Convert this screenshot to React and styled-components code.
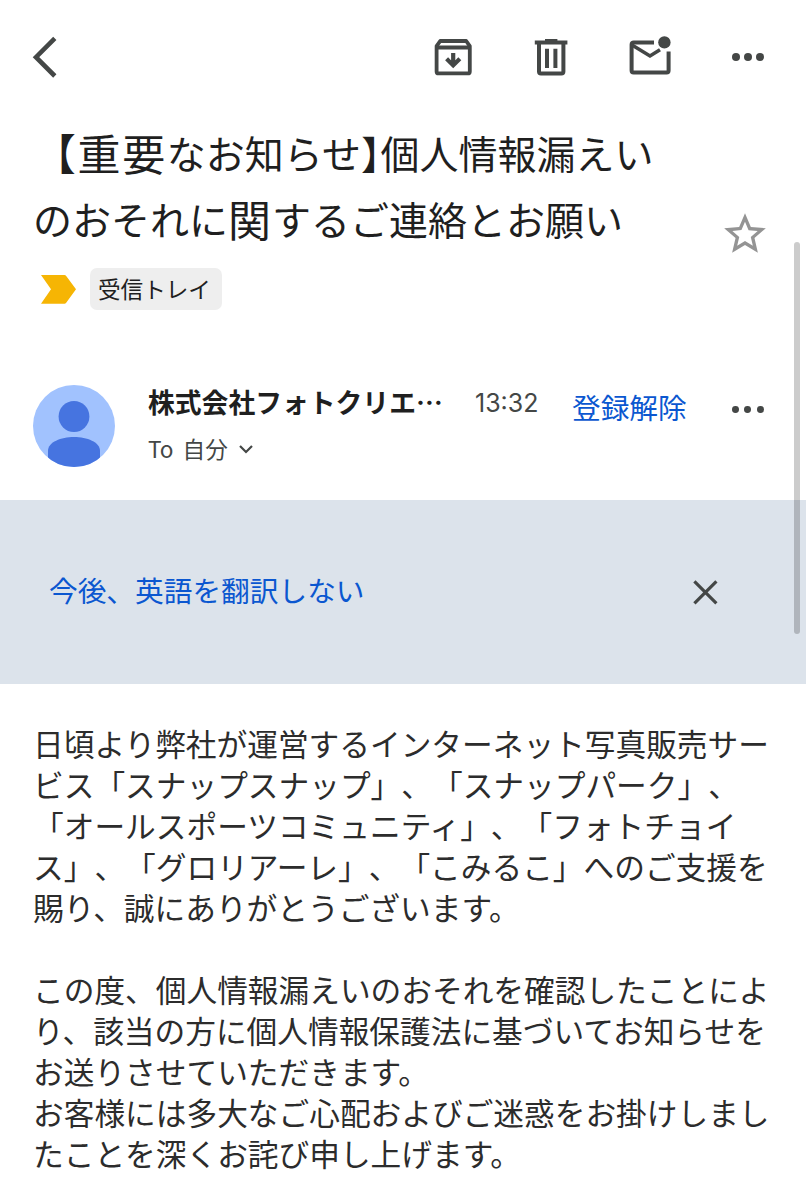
import React from 'react';
import styled, { createGlobalStyle } from 'styled-components';


function App() {
    return(
        <Screen>
            <GlobalStyle/>
            <Toolbar/>
            <Subject/>
            <Sender/>
            <TranslateBar/>
            <Message/>
            <ScrollThumb/>
        </Screen>
    )
}
export default App;

function Toolbar() {
    return(
        <ToolbarWrap>
            <IconButton $width={26} aria-label="戻る">
                <Icon width="26" height="42" viewBox="0 0 26 42" stroke="#444746" strokeWidth="4.6">
                    <path d="M23.8 2.4 5 21.2 23.8 40"/>
                </Icon>
            </IconButton>
            <Actions>
                <IconButton $width={38} aria-label="アーカイブ">
                    <Icon width="38" height="38" viewBox="0 0 38 38" stroke="#444746" strokeWidth="3.8">
                        <path d="M2.6 8.2V33.400a2 2 0 0 0 2 2h29.200a2 2 0 0 0 2-2V8.200L32.200 3H6.200z" strokeLinejoin="round"/>
                        <path d="M2.600 9.400h33.200" strokeWidth="4"/>
                        <path d="M19.200 15v12M12.600 20.800l6.600 6.600 6.600-6.600" strokeWidth="4.200"/>
                    </Icon>
                </IconButton>
                <IconButton $width={34} aria-label="削除">
                    <Icon width="34" height="38" viewBox="0 0 34 38" stroke="#444746" strokeWidth="4">
                        <path d="M.8 4.6h32.6M11 3h12.4"/>
                        <path d="M5 5v28.4a2 2 0 0 0 2 2h20.4a2 2 0 0 0 2-2V5"/>
                        <path d="M13 10.8v19.2M21.400 10.800v19.200"/>
                    </Icon>
                </IconButton>
                <IconButton $width={42} aria-label="未読にする">
                    <Icon width="42" height="40" viewBox="0 0 42 40" stroke="#444746" strokeWidth="4">
                        <path d="M25 7.400H4.600a2 2 0 0 0-2 2v26a2 2 0 0 0 2 2h33a2 2 0 0 0 2-2V16.600"/>
                        <path d="M3 10l18 11 10-6.200" strokeWidth="3.600"/>
                        <circle cx="35.400" cy="7.400" r="6.200" fill="#444746" stroke="none"/>
                    </Icon>
                </IconButton>
                <IconButton $width={34} aria-label="その他">
                    <Dots $size={8.4}><i/><i/><i/></Dots>
                </IconButton>
            </Actions>
        </ToolbarWrap>
    )
}

function Subject() {
    return(
        <SubjectWrap>
            <SubjectRow>
                <Title>
                    <Large $spacing={1.6}>【重要</Large>なお知らせ<Half>】</Half>個人情報漏えい<br/>
                    のおそれに<Large $spacing={1}>関</Large>するご連絡とお願い
                </Title>
                <StarButton aria-label="スター">
                    <svg width="50" height="50" viewBox="0 0 24 24" fill="#949494">
                        <path d="m22 9.24-7.19-.62L12 2 9.19 8.63 2 9.24l5.46 4.73L5.82 21 12 17.27 18.18 21l-1.63-7.03zM12 15.4l-3.76 2.27 1-4.28-3.32-2.88 4.38-.38L12 6.1l1.71 4.04 4.38.38-3.32 2.88 1 4.28z"/>
                    </svg>
                </StarButton>
            </SubjectRow>
            <Labels>
                <svg width="36" height="29" viewBox="0 0 36 29" fill="#f6b504">
                    <path d="M0 0h23.5a2 2 0 0 1 1.5.8L35 14.3 25 27.9a2 2 0 0 1-1.5.8H0l10-14.4z"/>
                </svg>
                <Tag>受信トレイ</Tag>
            </Labels>
        </SubjectWrap>
    )
}

function Sender() {
    return(
        <SenderWrap>
            <Avatar viewBox="0 0 82 82">
                <clipPath id="avatar"><circle cx="41" cy="41" r="41"/></clipPath>
                <g clipPath="url(#avatar)">
                    <path d="M0 0h82v82H0z" fill="#a1c2fe"/>
                    <circle cx="41" cy="31.5" r="15.4" fill="#4674e0"/>
                    <path d="M15 82V66C15 57 28 52 41 52s26 5 26 14v16z" fill="#4674e0"/>
                </g>
            </Avatar>
            <SenderInfo>
                <NameRow>
                    <Name>株式会社フォトクリエ…</Name>
                    <Time>13:32</Time>
                </NameRow>
                <Recipient>
                    To 自分
                    <Icon width="16" height="10" viewBox="0 0 16 10" stroke="#444746" strokeWidth="2.2">
                        <path d="m2 2 6 6 6-6"/>
                    </Icon>
                </Recipient>
            </SenderInfo>
            <Unsubscribe>登録解除</Unsubscribe>
            <Dots $size={6.8}><i/><i/><i/></Dots>
        </SenderWrap>
    )
}

function TranslateBar() {
    return(
        <TranslateWrap>
            <TranslateLink>今後、英語を翻訳しない</TranslateLink>
            <IconButton $width={26} aria-label="閉じる">
                <Icon width="26" height="26" viewBox="0 0 26 26" stroke="#444746" strokeWidth="3.2">
                    <path d="m2.4 2.4 22 22M24.4 2.4l-22 22"/>
                </Icon>
            </IconButton>
        </TranslateWrap>
    )
}

function Message() {
    return(
        <MessageWrap>
            <Paragraph>
                日頃より弊社が運営するインターネット写真販売サー<br/>
                ビス「スナップスナップ」、「スナップパーク」、<br/>
                「オールスポーツコミュニティ」、「フォトチョイ<br/>
                ス」、「グロリアーレ」、「こみるこ」へのご支援を<br/>
                賜り、誠にありがとうございます。
            </Paragraph>
            <Paragraph>
                この度、個人情報漏えいのおそれを確認したことによ<br/>
                り、該当の方に個人情報保護法に基づいてお知らせを<br/>
                お送りさせていただきます。<br/>
                お客様には多大なご心配およびご迷惑をお掛けしまし<br/>
                たことを深くお詫び申し上げます。
            </Paragraph>
        </MessageWrap>
    )
}

const GlobalStyle = createGlobalStyle`
    * { box-sizing:border-box; }
    body {
        margin:0;
        background:#fff; color:#1f1f1f;
        font-family:"Noto Sans CJK JP", sans-serif;
        text-spacing-trim:space-all;
    }
    p, h1 { margin:0; }
    svg { display:block; flex:none; }
    button {
        border:0; padding:0;
        background:none; font-family:inherit;
    }
`
const Screen = styled.div`
    position:relative;
    width:806px; height:1200px;
    overflow:hidden;
`
const Icon = styled.svg`
    fill:none;
`
const IconButton = styled.button`
    display:flex; align-items:center; justify-content:center;
    width:${p => p.$width}px;
`
const Dots = styled.span`
    display:flex; align-items:center; justify-content:space-between;
    width:33px; flex:none;
    i {
        width:${p => p.$size}px; height:${p => p.$size}px;
        border-radius:50%;
        background:#444746;
    }
`
const ToolbarWrap = styled.header`
    display:flex; align-items:center; justify-content:space-between;
    height:114px;
    padding:0 41px 0 31px;
`
const Actions = styled.div`
    display:flex; align-items:center;
    gap:62px;
    button:nth-child(3) { margin:-4px 0 0 -1px; }
    button:last-child { margin-left:-2px; }
`
const SubjectWrap = styled.section`
    height:264px;
    padding:5px 36px 0 34px;
`
const SubjectRow = styled.div`
    display:flex; justify-content:space-between; align-items:flex-end;
    height:133px;
`
const Title = styled.h1`
    height:133px;
    margin-left:-1px;
    font-size:39px; font-weight:400; line-height:66px;
    white-space:nowrap;
`
const Large = styled.span`
    font-size:43px; line-height:1;
    letter-spacing:${p => p.$spacing}px;
    vertical-align:-1.5px;
`
const Half = styled.span`
    font-feature-settings:"halt";
`
const StarButton = styled.button`
    margin-bottom:-7px;
`
const Labels = styled.div`
    display:flex; align-items:center;
    gap:13px;
    margin-top:16px; padding-left:7px;
`
const Tag = styled.span`
    height:42px; width:132px;
    padding-left:8px;
    border-radius:7px;
    background:#eee;
    font-size:22.6px; line-height:41px;
`
const SenderWrap = styled.section`
    display:flex; align-items:flex-start;
    height:122px;
    padding:7px 42px 0 33px;
    ${Dots} { margin:28px 0 0 45px; width:32px; }
    ${Dots} i { margin-top:-7px; }
`
const Avatar = styled.svg`
    width:82px; height:82px;
`
const SenderInfo = styled.div`
    width:424px;
    margin-left:33px;
`
const NameRow = styled.div`
    display:flex; align-items:center;
    height:34px;
`
const Name = styled.p`
    width:327px;
    font-size:26.8px; font-weight:700; line-height:34px;
    white-space:nowrap;
`
const Time = styled.span`
    margin-top:2px;
    color:#444746;
    font-family:Inter, sans-serif; font-size:25px; line-height:34px;
`
const Recipient = styled.p`
    display:flex; align-items:center;
    gap:10px;
    margin-top:13px;
    color:#444746;
    font-size:22.6px; line-height:34px;
    word-spacing:4px;
`
const Unsubscribe = styled.button`
    color:#0b57d0;
    font-size:28.7px; line-height:44px;
    white-space:nowrap;
`
const TranslateWrap = styled.section`
    display:flex; align-items:center; justify-content:space-between;
    height:184px;
    padding:0 88px 0 49px;
    background:#dce3eb;
`
const TranslateLink = styled.p`
    margin-top:-4px;
    color:#0b57d0;
    font-size:28.7px; line-height:44px;
`
const MessageWrap = styled.main`
    display:flex; flex-direction:column;
    gap:41px;
    padding:38px 0 0 33px;
`
const Paragraph = styled.p`
    color:#2c2c2c;
    font-size:30.7px; line-height:41px;
    white-space:nowrap;
`
const ScrollThumb = styled.div`
    position:absolute; top:242px; right:6px;
    width:6px; height:392px;
    border-radius:3px;
    background:rgba(0,0,0,0.2);
`
